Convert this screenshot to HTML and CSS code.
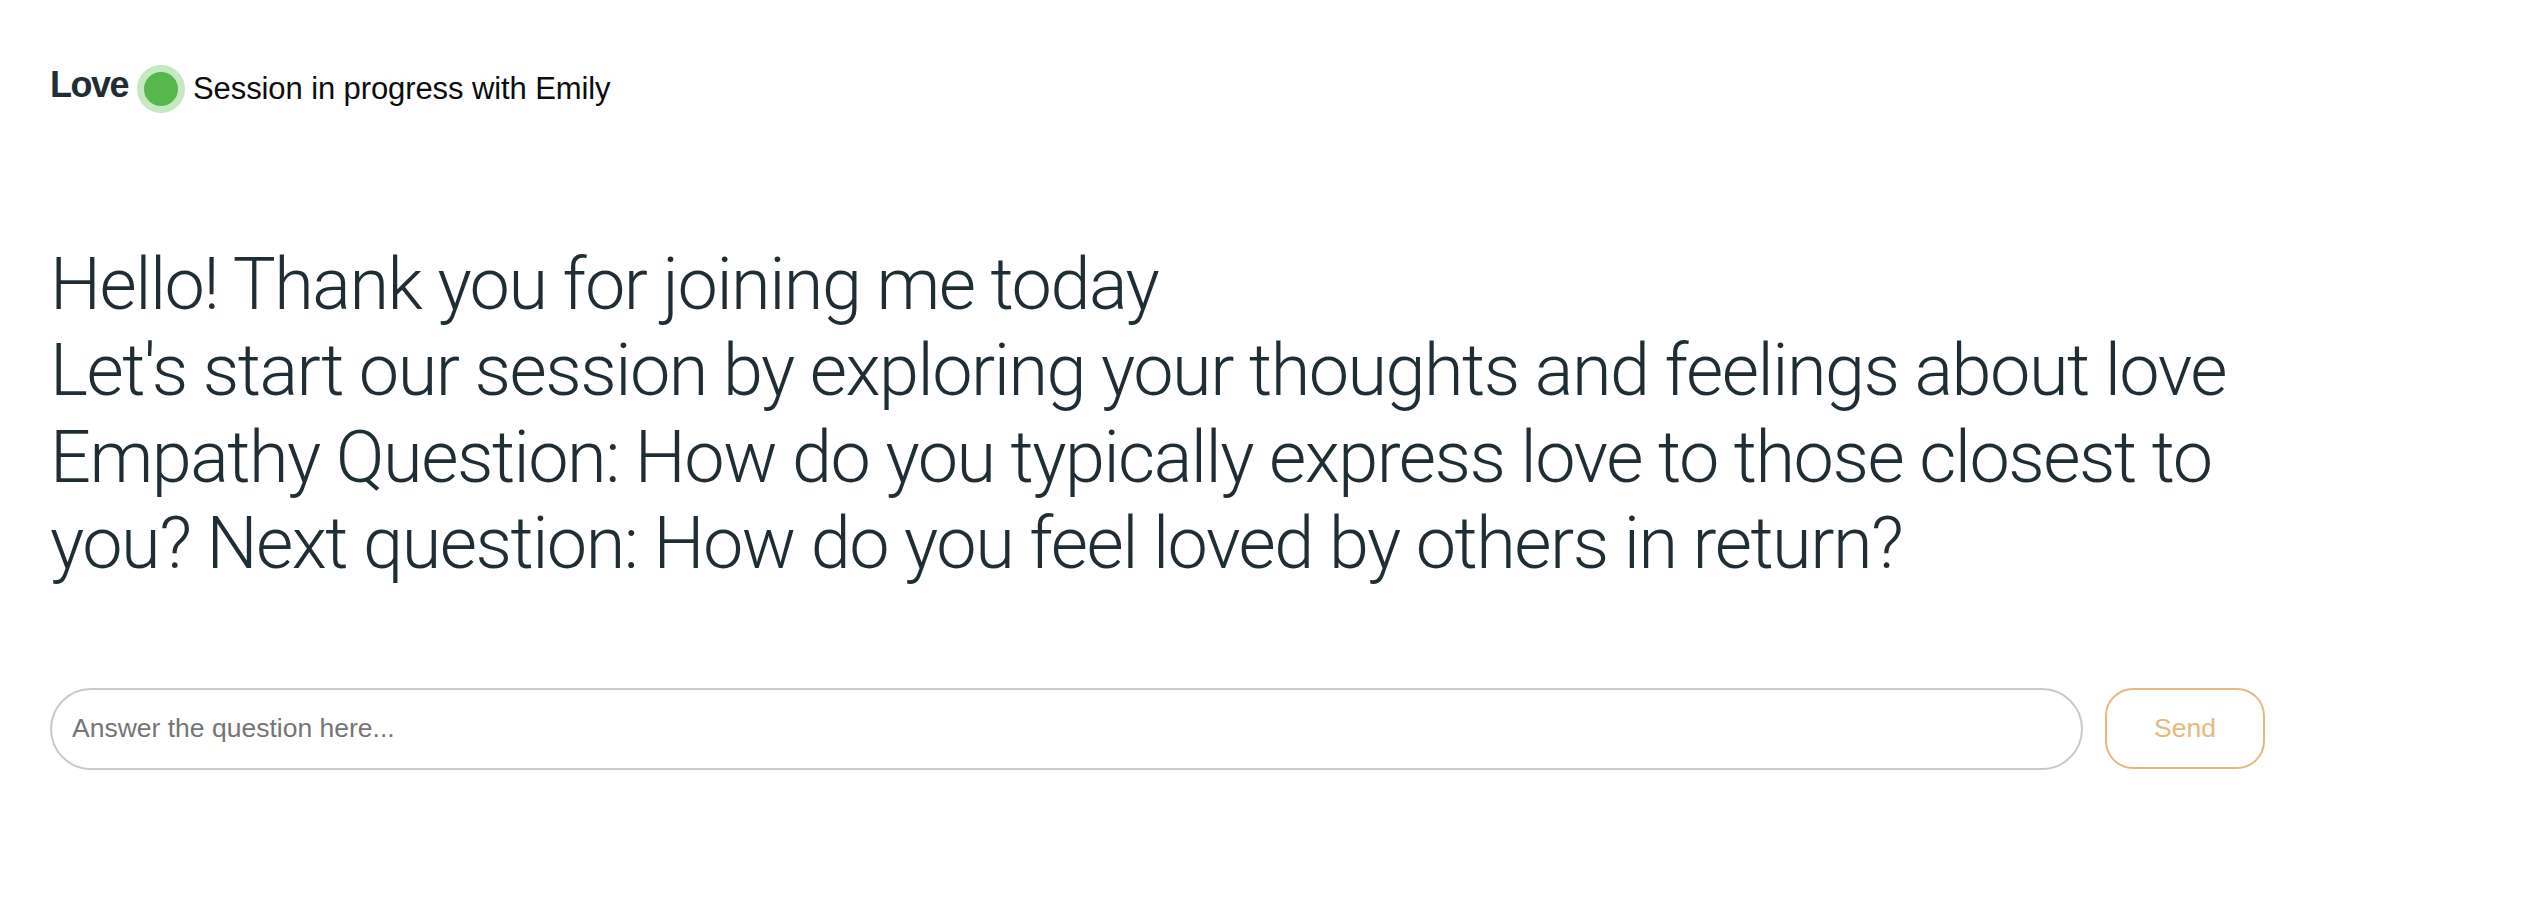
FILE: index.html
```html
<!DOCTYPE html>
<html lang="en">
<head>
<meta charset="utf-8">
<title>Love – Session</title>
<link rel="stylesheet" href="styles.css">
</head>
<body>
<div class="page">
  <header class="header">
    <span class="brand">Love</span>
    <span class="status-dot"></span>
    <span class="status-text">Session in progress with Emily</span>
  </header>

  <section class="messages">
    <p class="message">Hello! Thank you for joining me today</p>
    <p class="message">Let's start our session by exploring your thoughts and feelings about love</p>
    <p class="message">Empathy Question: How do you typically express love to those closest to you? Next question: How do you feel loved by others in return?</p>
  </section>

  <form class="answer-row" onsubmit="return false;">
    <input class="answer-input" type="text" placeholder="Answer the question here...">
    <button class="send-btn" type="submit">Send</button>
  </form>
</div>
</body>
</html>
```
FILE: styles.css
```css
html, body {
  margin: 0;
  padding: 0;
  background: #ffffff;
}

.page {
  width: 2215px;
  padding: 65px 0 0 50px;
  font-family: "Liberation Sans", Arial, sans-serif;
}

.header {
  display: flex;
  align-items: center;
  height: 48px;
}

.brand {
  font-family: "Liberation Sans", Arial, sans-serif;
  font-weight: 700;
  font-size: 36px;
  letter-spacing: -1.5px;
  color: #1f2d35;
  margin-bottom: 8px;
}

.status-dot {
  box-sizing: border-box;
  width: 48px;
  height: 48px;
  margin-left: 9px;
  border-radius: 50%;
  background: #56b84c;
  border: 7px solid #c5e8c0;
  flex-shrink: 0;
}

.status-text {
  margin-left: 8px;
  font-size: 31px;
  letter-spacing: -0.1px;
  color: #0d0d0d;
}

.messages {
  margin-top: 129px;
  font-family: Roboto, "Liberation Sans", sans-serif;
  font-weight: 300;
  font-size: 72px;
  line-height: 86.4px;
  letter-spacing: -1.5px;
  color: #1f2d35;
}

.message {
  margin: 0;
}

.answer-row {
  display: flex;
  align-items: center;
  gap: 22px;
  margin: 100px 0 0 0;
}

.answer-input {
  flex: 1;
  box-sizing: border-box;
  height: 82px;
  padding: 0 20px;
  border: 2px solid #c9c9c9;
  border-radius: 41px;
  font-family: "Liberation Sans", Arial, sans-serif;
  font-size: 26.5px;
  color: #333333;
  outline: none;
  background: #ffffff;
}

.answer-input::placeholder {
  color: #757575;
}

.send-btn {
  box-sizing: border-box;
  width: 160px;
  height: 81px;
  border: 2px solid #e7b77b;
  border-radius: 28px;
  background: #ffffff;
  color: #e8b77b;
  font-family: "Liberation Sans", Arial, sans-serif;
  font-size: 26.5px;
  cursor: pointer;
}
```
